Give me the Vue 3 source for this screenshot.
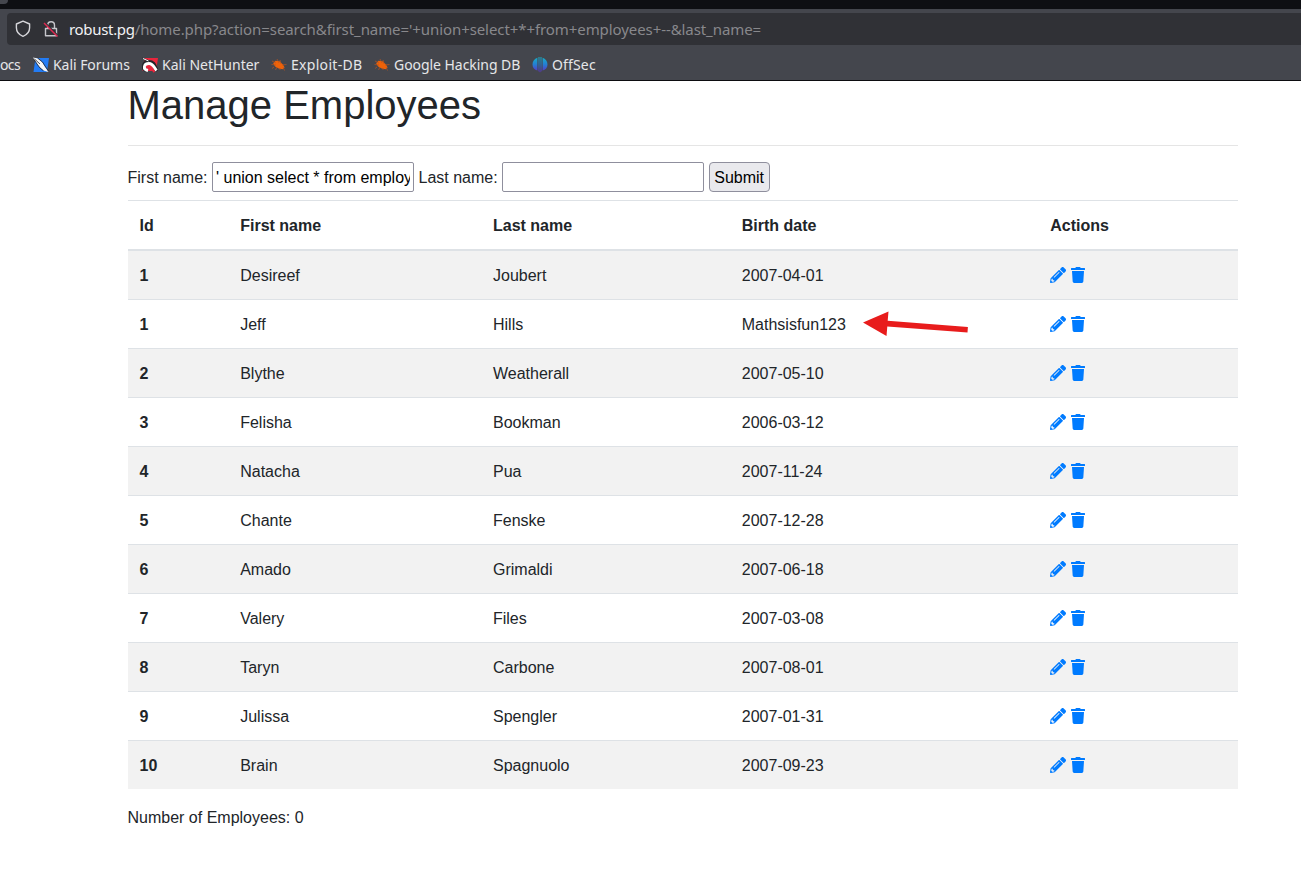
<script setup>
import { ref } from 'vue'

const firstName = ref("' union select * from employees --")
const lastName = ref('')

const employees = [
  [1, 'Desireef', 'Joubert', '2007-04-01'],
  [1, 'Jeff', 'Hills', 'Mathsisfun123'],
  [2, 'Blythe', 'Weatherall', '2007-05-10'],
  [3, 'Felisha', 'Bookman', '2006-03-12'],
  [4, 'Natacha', 'Pua', '2007-11-24'],
  [5, 'Chante', 'Fenske', '2007-12-28'],
  [6, 'Amado', 'Grimaldi', '2007-06-18'],
  [7, 'Valery', 'Files', '2007-03-08'],
  [8, 'Taryn', 'Carbone', '2007-08-01'],
  [9, 'Julissa', 'Spengler', '2007-01-31'],
  [10, 'Brain', 'Spagnuolo', '2007-09-23'],
]
</script>

<template>
  <div class="window">
    <header class="chrome">
      <div class="tabs"><i class="tab"></i></div>
      <div class="toolbar">
        <div class="urlbar">
          <svg class="shield" width="16" height="18" viewBox="0 0 16 18" fill="none" stroke="#d6d6da" stroke-width="1.4" stroke-linejoin="round">
            <path d="M8 1.200 14.600 4v3.800c0 4-2.600 7-6.600 8.600C4 14.800 1.400 11.800 1.400 7.800V4z" />
          </svg>
          <svg class="lock" width="16" height="18" viewBox="0 0 16 18" fill="none">
            <path d="M4.700 8.500V5.200a3.400 3.400 0 0 1 6.800 0v3.300M2.500 8.500h11v7.300h-11z" stroke="#c6c6cb" stroke-width="1.400" stroke-linejoin="round" />
            <path d="M1.700 2.300l13 13" stroke="#303136" stroke-width="1.400" />
            <path d="M1 3l13.500 13.500" stroke="#e22850" stroke-width="1.400" />
          </svg>
          <span class="url"><b>robust.pg</b>/home.php?action=search&amp;first_name='+union+select+*+from+employees+--&amp;last_name=</span>
        </div>
      </div>
      <nav class="bookmarks">
        <span class="bm docs">ocs</span>
        <span class="bm forums">
          <svg width="16" height="16" viewBox="0 0 16 16">
            <path d="M2.500 1H16l-2 14H.5z" fill="#237cf5" />
            <path d="M0 .5 5 1.500l4.500 4 2 3.500 4 6-5-1.500L6.500 10 4 6.500z" fill="#f6f6f6" />
            <path d="M4.500 1 9.500 5l2.500 4 3.500 5" stroke="#23252b" stroke-width=".8" fill="none" />
            <path d="M1 2.500 4 7l3 4 3.500 2.800M1.500 2 7 7" stroke="#23252b" stroke-width=".8" fill="none" />
          </svg>Kali Forums</span>
        <span class="bm nethunter">
          <svg width="16" height="16" viewBox="0 0 16 16">
            <path d="M2.500 1H16l-2 13H.5z" fill="#e9253c" />
            <path d="M0 .5 7.500 3.500 4 5.500z" fill="#23252b" />
            <path d="M4.500 13.500C-.5 11 1.500 5 7 5s5.500 4.500 8 9" stroke="#23252b" stroke-width="4" fill="none" />
            <path d="M1 1.500 6.500 4" stroke="#fff" stroke-width="1" />
            <path d="M6 13.500C.5 12.500 1.500 6.500 7 6.500c4 0 5 4 7.500 7" stroke="#fff" stroke-width="2.800" fill="none" />
            <path d="M6 10.500 8 10l4.500 5" stroke="#e9253c" stroke-width="2" fill="none" />
          </svg>Kali NetHunter</span>
        <span v-for="name in ['Exploit-DB', 'Google Hacking DB']" :key="name" class="bm" :class="name === 'Exploit-DB' ? 'exploit' : 'google'">
          <svg width="16" height="16" viewBox="0 0 16 16">
            <path d="M2.200 6.200 4.500 3.800l4 .4 3.400 3.200 1.700 3-2 1.800-4-.8-3.500-2z" fill="#ee6209" />
            <path d="M.5 7.500 5 8M1 4l4 2M6 2l2 4M9 3l1 4M11 8l4.500-.5M3 10l-2 1.500M6 10l-1.500 3M12 10l1.500 3.500M9 11v2" stroke="#b95520" stroke-width=".7" />
          </svg>{{ name }}</span>
        <span class="bm offsec">
          <svg width="16" height="16" viewBox="0 0 16 16">
            <defs>
              <linearGradient id="os" x1="0" y1="0" x2="0" y2="16" gradientUnits="userSpaceOnUse">
                <stop offset="0" stop-color="#16b0c6" /><stop offset=".45" stop-color="#2381d2" /><stop offset="1" stop-color="#6524c4" />
              </linearGradient>
            </defs>
            <path d="M5.400.8v12.700C2.500 13 .5 10.500.5 7.500S2.500 1.800 5.400.8zM10.600.8v12.700c2.900-.5 4.900-3 4.900-6s-2-5.700-4.900-6.700zM6.500 0h1v15.500l-1-1.500zM8.500 0h1v14l-1 1.500z" fill="url(#os)" />
          </svg>OffSec</span>
      </nav>
    </header>

    <main class="container">
      <h1>Manage Employees</h1>
      <hr>
      <form @submit.prevent>
        <label for="fn">First name:</label>
        <input id="fn" v-model="firstName" type="text">
        <label for="ln">Last name:</label>
        <input id="ln" v-model="lastName" type="text">
        <button type="submit">Submit</button>
      </form>
      <div class="table">
        <div class="row head">
          <span>Id</span><span>First name</span><span>Last name</span><span>Birth date</span><span>Actions</span>
        </div>
        <div v-for="(e, i) in employees" :key="i" class="row">
          <b>{{ e[0] }}</b><span>{{ e[1] }}</span><span>{{ e[2] }}</span>
          <span class="birth">{{ e[3] }}
            <svg v-if="i === 1" class="arrow" width="108" height="28" viewBox="0 0 108 28" fill="#e81c1c">
              <path d="M1 12.500 26.500 1.500l-.8 9.200 80.200 6.300-.4 5.500-80.200-6-.8 9.500z" />
            </svg>
          </span>
          <span class="actions">
            <svg width="16" height="16" viewBox="0 0 512 512"><path d="M497.900 142.100l-46.100 46.100c-4.700 4.700-12.300 4.700-17 0l-111-111c-4.700-4.700-4.700-12.300 0-17l46.100-46.100c18.700-18.700 49.100-18.700 67.900 0l60.100 60.100c18.800 18.700 18.800 49.100 0 67.900zM284.200 99.800L21.600 362.400.4 483.900c-2.900 16.400 11.400 30.600 27.800 27.800l121.500-21.300 262.600-262.600c4.700-4.700 4.700-12.300 0-17l-111-111c-4.800-4.700-12.400-4.700-17.100 0zM124.100 339.900c-5.500-5.500-5.500-14.300 0-19.800l154-154c5.500-5.500 14.300-5.500 19.800 0s5.500 14.300 0 19.800l-154 154c-5.500 5.500-14.300 5.500-19.800 0zM88 424h48v36.300l-64.500 11.300-31.100-31.100L51.700 376H88v48z" /></svg>
            <svg width="14" height="16" viewBox="0 0 448 512"><path d="M432 32H312l-9.400-18.700A24 24 0 0 0 281.100 0H166.800a23.720 23.720 0 0 0-21.400 13.300L136 32H16A16 16 0 0 0 0 48v32a16 16 0 0 0 16 16h416a16 16 0 0 0 16-16V48a16 16 0 0 0-16-16zM53.200 467a48 48 0 0 0 47.900 45h245.800a48 48 0 0 0 47.900-45L416 128H32z" /></svg>
          </span>
        </div>
      </div>
      <p>Number of Employees: 0</p>
    </main>
  </div>
</template>

<style>
body { background: #fff; overflow: hidden; }
</style>

<style scoped>
* { box-sizing: border-box; }
.window { height: 872px; overflow: hidden; font: 16px/24px "Liberation Sans", Arial, sans-serif; color: #212529; }
.chrome { height: 81px; background: #44464d; border-bottom: 1px solid #0c0c10; font-family: "Noto Sans", sans-serif; overflow: hidden; }
.tabs { height: 9px; background: #0e0f13; }
.tab { display: block; width: 8px; height: 4px; background: #44464d; border-bottom-right-radius: 4px; }
.toolbar { height: 36px; padding: 4px 0 0 7px; }
.urlbar { height: 32px; background: #303136; border-radius: 4px 0 0 4px; display: flex; align-items: center; padding-left: 8px; }
.shield, .lock { flex: none; margin-bottom: 1px; }
.lock { margin-left: 12px; }
.url { margin-left: 10px; font-size: 15px; letter-spacing: -.08px; white-space: nowrap; color: #88888c; }
.url b { font-weight: 400; letter-spacing: -.32px; color: #f2f2f5; }
.bookmarks { height: 35px; display: flex; align-items: center; font-size: 14px; color: #e6e6e9; padding-top: 4px; }
.bm { display: flex; align-items: center; gap: 4px; white-space: nowrap; flex: none; }
.docs { width: 33px; letter-spacing: -.6px; }
.forums { width: 109px; letter-spacing: -.05px; }
.nethunter { width: 129px; }
.exploit { width: 103px; letter-spacing: .3px; }
.google { width: 158px; letter-spacing: -.05px; }
.offsec { letter-spacing: .15px; }
.container { width: 1110.500px; margin-left: 127.500px; }
h1 { margin: 0; height: 64px; font-size: 40px; line-height: 48px; font-weight: 400; }
hr { margin: 0; border: 0; height: 1px; background: #e5e5e5; }
form { height: 54px; padding-top: 16px; display: flex; align-items: flex-start; line-height: 30px; }
label { padding-top: 1px; }
input { width: 202px; height: 30px; margin: 0 4.500px 0 4.500px; padding: 2px 3px 0; border: 1px solid #8f8f9d; border-radius: 2px; background: #fff; color: #000; font: inherit; outline: 0; }
button { height: 30px; width: 61px; padding: 0; border: 1px solid #8f8f9d; border-radius: 4px; background: #e9e9ed; color: #000; font: inherit; }
.row { display: grid; grid-template-columns: 100.700px 252.800px 248.800px 308.500px 1fr; align-items: center; height: 49px; padding: 2px 0 0 12px; border-top: 1px solid #dee2e6; }
.row:nth-child(even) { background: #f2f2f2; }
.row.head { height: 51px; font-weight: 700; border-bottom: 2px solid #dee2e6; }
.row.head + .row { border-top: 0; height: 48px; }
.birth { position: relative; }
.arrow { position: absolute; left: 120px; top: -3px; }
.actions { display: flex; gap: 4.500px; fill: #007bff; margin-top: -2px; }
p { margin: 17px 0 0; }
</style>
